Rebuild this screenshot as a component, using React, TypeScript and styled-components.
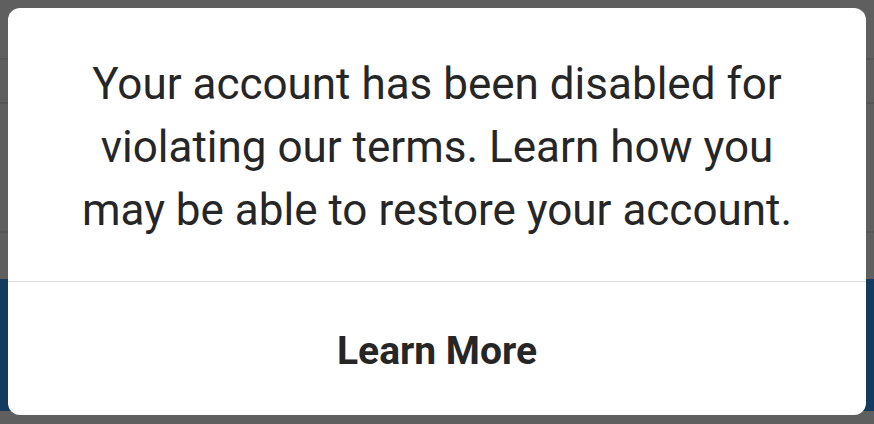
import * as React from 'react';
import styled, { createGlobalStyle } from 'styled-components';

const GlobalStyle = createGlobalStyle`
  html, body {
    margin: 0;
    padding: 0;
    background: #5f5f5f;
    font-family: Roboto, "Liberation Sans", sans-serif;
  }
`;

export default function App() {
  return (
    <>
      <GlobalStyle />
      <Screen>
        <Backdrop>
          <ListRow $height={60} />
          <ListRow $height={44} />
          <ListRow $height={129} />
          <Banner />
        </Backdrop>
        <Dialog role="dialog">
          <Message>
            Your account has been disabled for violating our terms. Learn how you
            may be able to restore your account.
          </Message>
          <ActionButton type="button">Learn More</ActionButton>
        </Dialog>
      </Screen>
    </>
  );
}

const Screen = styled.div`
  position: relative;
  width: 874px;
  height: 424px;
  overflow: hidden;
  background: #5f5f5f;
`;

const Backdrop = styled.div`
  display: flex;
  flex-direction: column;
`;

const ListRow = styled.div<{ $height: number }>`
  height: ${(p) => p.$height}px;
  border-bottom: 2px solid #565656;
  box-sizing: border-box;
`;

const Banner = styled.div`
  margin-top: 46px;
  height: 132px;
  background: #143a5f;
`;

const Dialog = styled.div`
  position: absolute;
  left: 8px;
  top: 8px;
  width: 858px;
  height: 407px;
  background: #ffffff;
  border-radius: 12px;
  display: flex;
  flex-direction: column;
  overflow: hidden;
`;

const Message = styled.p`
  margin: 0;
  height: 274px;
  box-sizing: border-box;
  padding: 45px 60px 0;
  border-bottom: 1px solid #dbdbdb;
  font-size: 44px;
  line-height: 63px;
  color: #262626;
  text-align: center;
`;

const ActionButton = styled.button`
  flex: 1;
  border: 0;
  background: transparent;
  font-family: Roboto, "Liberation Sans", sans-serif;
  font-weight: 700;
  font-size: 39px;
  color: #262626;
  padding: 4px 0 0;
  cursor: pointer;
`;
